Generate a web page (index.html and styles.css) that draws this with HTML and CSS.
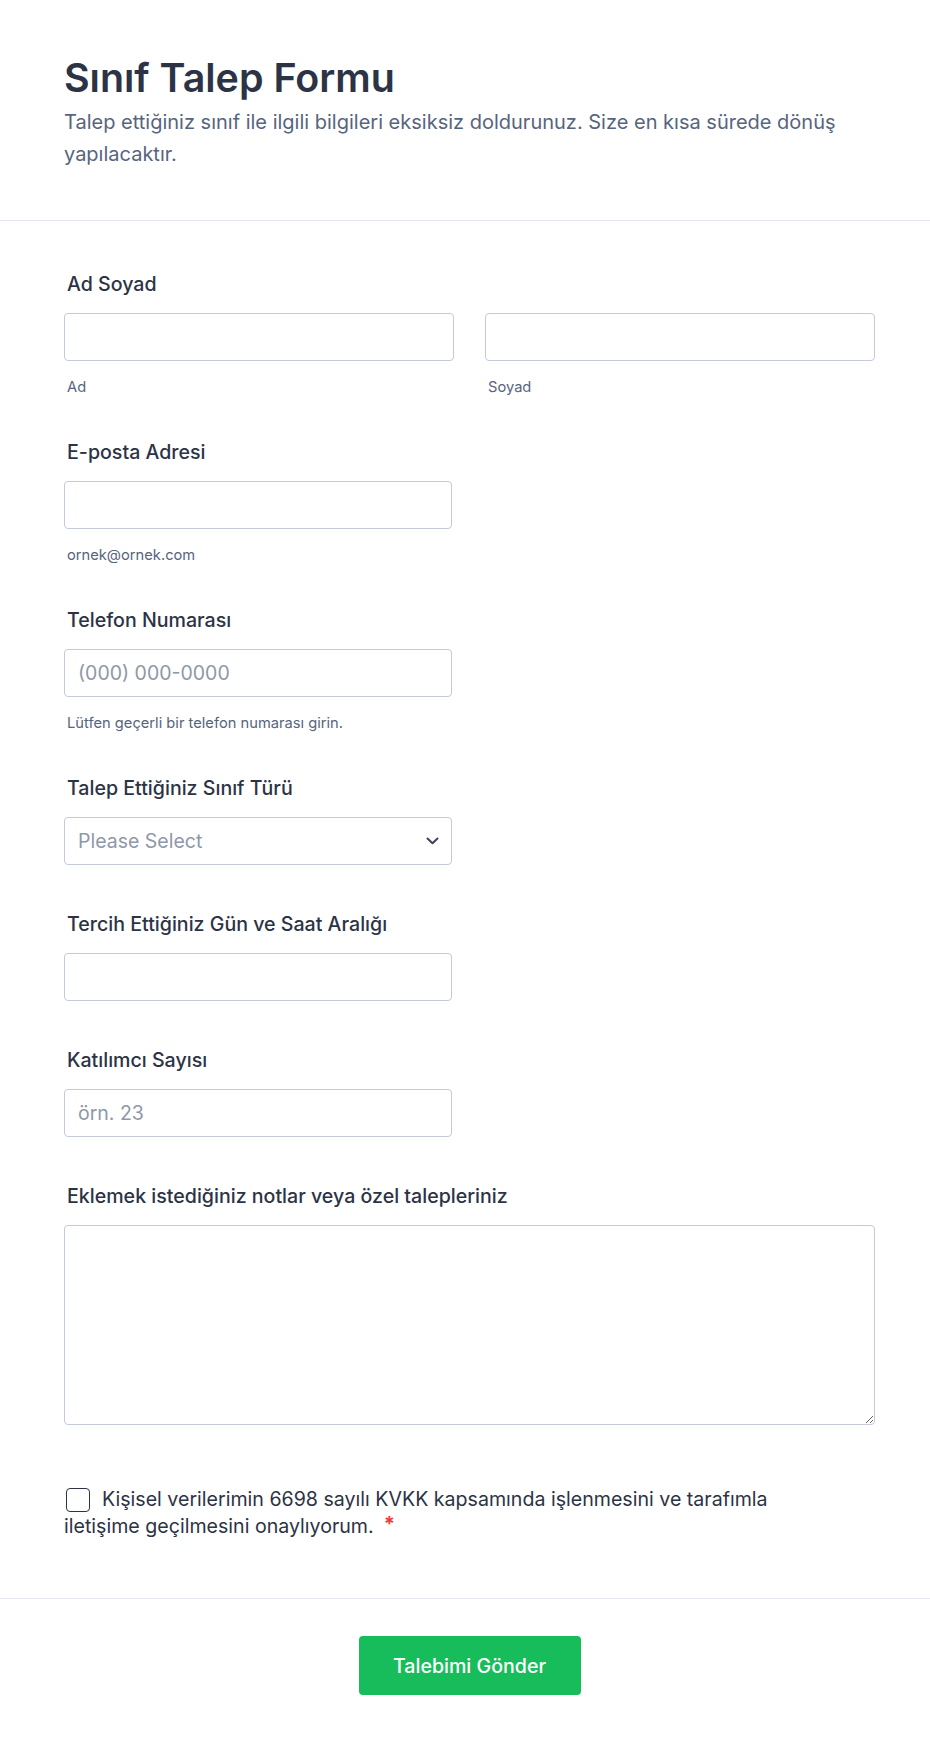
FILE: index.html
```html
<!DOCTYPE html>
<html lang="tr">
<head>
<meta charset="utf-8">
<title>Sınıf Talep Formu</title>
<link rel="stylesheet" href="styles.css">
</head>
<body>
<header class="form-header">
  <h1 class="form-title">Sınıf Talep Formu</h1>
  <p class="form-desc">Talep ettiğiniz sınıf ile ilgili bilgileri eksiksiz doldurunuz. Size en kısa sürede dönüş yapılacaktır.</p>
</header>
<main class="form-body">
  <div class="field">
    <label class="field-label">Ad Soyad</label>
    <div class="name-row">
      <div class="name-col">
        <input class="input input-full" type="text">
        <span class="sublabel">Ad</span>
      </div>
      <div class="name-col">
        <input class="input input-full" type="text">
        <span class="sublabel">Soyad</span>
      </div>
    </div>
  </div>
  <div class="field">
    <label class="field-label">E-posta Adresi</label>
    <input class="input input-half" type="email">
    <span class="sublabel">ornek@ornek.com</span>
  </div>
  <div class="field">
    <label class="field-label">Telefon Numarası</label>
    <input class="input input-half" type="tel" placeholder="(000) 000-0000">
    <span class="sublabel">Lütfen geçerli bir telefon numarası girin.</span>
  </div>
  <div class="field">
    <label class="field-label">Talep Ettiğiniz Sınıf Türü</label>
    <div class="select-wrap">
      <select class="input input-full select">
        <option>Please Select</option>
      </select>
      <svg class="chevron" width="13" height="8" viewBox="0 0 13 8"><path d="M1.5 1.5 6.5 6.2l5-4.7" fill="none" stroke="#3b4456" stroke-width="2" stroke-linecap="round" stroke-linejoin="round"/></svg>
    </div>
  </div>
  <div class="field">
    <label class="field-label">Tercih Ettiğiniz Gün ve Saat Aralığı</label>
    <input class="input input-half" type="text">
  </div>
  <div class="field">
    <label class="field-label">Katılımcı Sayısı</label>
    <input class="input input-half" type="text" placeholder="örn. 23">
  </div>
  <div class="field">
    <label class="field-label">Eklemek istediğiniz notlar veya özel talepleriniz</label>
    <textarea class="textarea"></textarea>
  </div>
  <div class="consent">
    <p class="consent-text"><input class="checkbox" type="checkbox" aria-label="Onay">Kişisel verilerimin 6698 sayılı KVKK kapsamında işlenmesini ve tarafımla iletişime geçilmesini onaylıyorum.<span class="required">*</span></p>
  </div>
</main>
<footer class="form-footer">
  <button class="submit" type="button">Talebimi Gönder</button>
</footer>
</body>
</html>
```
FILE: styles.css
```css
* { box-sizing: border-box; }

body {
  margin: 0;
  background: #ffffff;
  font-family: Inter, "Noto Sans", "Liberation Sans", sans-serif;
  color: #2c3345;
}

.form-header {
  padding: 54px 55px 50px 64px;
  border-bottom: 1px solid #e3e5ef;
}

.form-title {
  margin: 0;
  font-size: 39.4px;
  line-height: 48px;
  font-weight: 600;
  color: #2c3345;
}

.form-desc {
  margin: 4px 0 0;
  font-size: 20px;
  line-height: 32px;
  color: #57647e;
}

.form-body {
  padding: 50px 55px 58px 64px;
  display: flex;
  flex-direction: column;
  gap: 46px;
}

.field {
  display: flex;
  flex-direction: column;
  align-items: flex-start;
}

.field-label {
  display: block;
  padding-left: 3px;
  font-size: 19.6px;
  line-height: 26px;
  font-weight: 500;
  color: #2c3345;
  margin-bottom: 16px;
}

.name-row {
  display: grid;
  grid-template-columns: 390px 390px;
  column-gap: 31px;
  width: 811px;
}

.name-col {
  display: flex;
  flex-direction: column;
}

.input {
  height: 48px;
  border: 1px solid #c3cad8;
  border-radius: 4px;
  padding: 0 13px;
  font-family: inherit;
  font-size: 19.5px;
  color: #2c3345;
  background: #ffffff;
  outline: none;
}

.input::placeholder { color: #8f97a8; }

.input-full { width: 100%; }
.input-half { width: 388px; }

.sublabel {
  display: block;
  padding-left: 3px;
  margin-top: 19px;
  margin-bottom: -1px;
  font-size: 14.7px;
  line-height: 14px;
  color: #57647e;
}

.select-wrap {
  position: relative;
  width: 388px;
}

.select {
  appearance: none;
  -webkit-appearance: none;
  color: #8f97a8;
}

.chevron {
  position: absolute;
  right: 13px;
  top: 20px;
}

.textarea {
  width: 811px;
  height: 200px;
  border: 1px solid #c3cad8;
  border-radius: 4px;
  font-family: inherit;
  font-size: 18px;
  resize: vertical;
  outline: none;
}

.consent {
  margin-top: 15px;
}

.consent-text {
  margin: 0;
  max-width: 750px;
  font-size: 19.6px;
  line-height: 27px;
  color: #2c3345;
}

.checkbox {
  appearance: none;
  -webkit-appearance: none;
  width: 24px;
  height: 24px;
  margin: 0 12px 0 2px;
  border: 1.5px solid #2c3345;
  border-radius: 4px;
  vertical-align: -6px;
  background: #ffffff;
}

.required {
  margin-left: 10px;
  color: #f23a3c;
  font-weight: 700;
  font-size: 20px;
  vertical-align: 2px;
  line-height: 1;
}

.form-footer {
  border-top: 1px solid #e3e5ef;
  padding: 37px 55px 50px 64px;
  display: flex;
  justify-content: center;
}

.submit {
  width: 222px;
  height: 59px;
  border: none;
  border-radius: 4px;
  background: #18bd5b;
  color: #ffffff;
  font-family: inherit;
  font-size: 19.6px;
  font-weight: 500;
}
```
